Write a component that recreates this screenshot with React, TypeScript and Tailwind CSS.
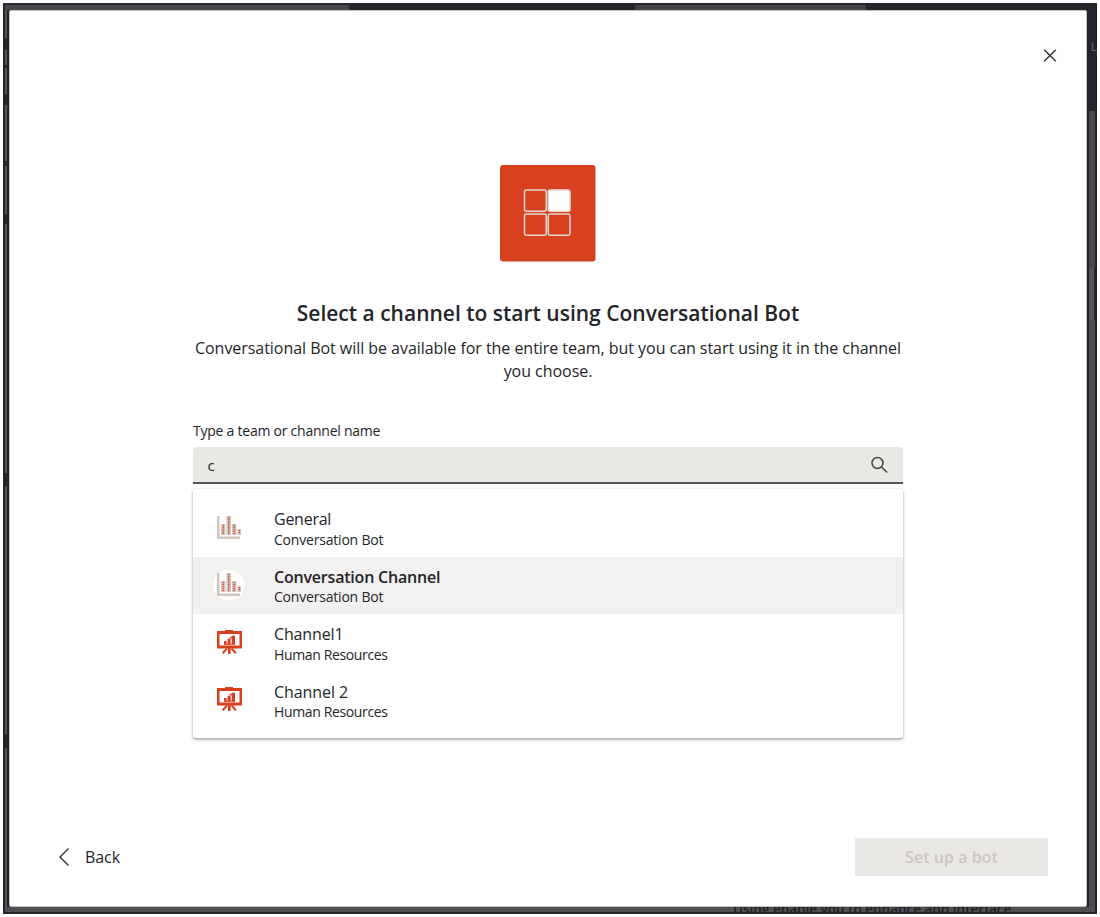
type Channel = {
  name: string;
  team: string;
  icon: "chart" | "easel";
  selected?: boolean;
  tracking: string;
  teamTracking: string;
};

const channels: Channel[] = [
  { name: "General", team: "Conversation Bot", icon: "chart", tracking: "tracking-[-0.25px]", teamTracking: "tracking-[-0.2px]" },
  { name: "Conversation Channel", team: "Conversation Bot", icon: "chart", selected: true, tracking: "tracking-[-0.2px]", teamTracking: "tracking-[-0.2px]" },
  { name: "Channel1", team: "Human Resources", icon: "easel", tracking: "tracking-[-0.15px]", teamTracking: "tracking-[-0.36px]" },
  { name: "Channel 2", team: "Human Resources", icon: "easel", tracking: "tracking-[-0.08px]", teamTracking: "tracking-[-0.36px]" },
];

function AppLogo() {
  return (
    <svg width="96" height="97" viewBox="0 0 96 97" className="block">
      <rect width="95.5" height="96.5" rx="3" fill="#d74120" />
      <g fill="none" stroke="#e6d9d3" strokeWidth="1.5">
        <rect x="24.5" y="25" width="21.75" height="21.25" rx="2" />
        <rect x="48.25" y="25" width="21.75" height="21.25" rx="2" fill="#fff" />
        <rect x="24.5" y="49" width="21.75" height="21.25" rx="2" />
        <rect x="48.25" y="49" width="21.75" height="21.25" rx="2" />
      </g>
    </svg>
  );
}

function ChartIcon() {
  return (
    <svg width="32" height="32" viewBox="0 0 32 32" className="block">
      <circle cx="16" cy="16" r="15.5" fill="#fff" />
      <g fill="#cfc6c0">
        <path d="M4 4h2.500v20.500h20.500v2.500h-23z" />
        <path d="M8 12h4.500v11H8zM13.500 4h4.500v19h-4.500zM19 12h4.500v11H19zM24.500 17h3.500v6h-3.500z" />
      </g>
      <g stroke="#e8401f" strokeWidth="1.3" strokeDasharray="1.2 0.8">
        <path d="M10.300 13v9M15.700 5v17M21.200 13v9M26.200 18v4" />
      </g>
    </svg>
  );
}

function EaselIcon() {
  return (
    <svg width="32" height="32" viewBox="0 0 32 32" className="block" fill="#d74120">
      <path fillRule="evenodd" d="M12 4V3h8v1h9v17.500H4V4zM6.500 7v11.500h20V7z" />
      <path d="M11 14h2.600v3.500H11zM14.600 12h3v5.500h-3zM18.800 8.800h3.200v8.700h-3.200z" />
      <path d="M11 16.800h11v.9H11zM14.800 11.500l6-3v3z" />
      <path d="M15 21h2.600v6H15z" />
      <path d="M14 21.500l-4.300 4.700M18.600 21.500l4.300 4.700" stroke="#d74120" strokeWidth="2" />
    </svg>
  );
}

function ChannelRow({ channel }: { channel: Channel }) {
  return (
    <li className={channel.selected ? "flex h-[57.5px] bg-[#f2f1ef] pt-[9.5px]" : "flex h-[57.5px] pt-[9.5px]"}>
      <span className="mt-[3px] ml-5 w-8 shrink-0">
        {channel.icon === "chart" ? <ChartIcon /> : <EaselIcon />}
      </span>
      <span className="ml-[29px] flex flex-col whitespace-nowrap pt-[0.5px]">
        <span className={`text-[16px] leading-5 ${channel.tracking} ${channel.selected ? "font-semibold" : "font-normal"}`}>
          {channel.name}
        </span>
        <span className={`mt-[0.5px] text-[14px] leading-5 ${channel.teamTracking}`}>{channel.team}</span>
      </span>
    </li>
  );
}

export default function App() {
  return (
    <div className="h-[917px] w-[1100px] bg-white pt-[3px] pl-[3px] font-['Open_Sans','Noto_Sans',sans-serif] text-[#252429]">
      <div className="flex h-[911px] w-[1094px] flex-col bg-[#25242a]">
        <div className="flex h-[7px] shrink-0 items-stretch pt-[2px]">
          <div className="ml-[2px] w-[344px] bg-[#48474b]" />
          <div className="ml-[286px] w-[231px] bg-[#444347]" />
        </div>
        <div className="flex h-[897px] shrink-0">
          <div className="flex w-[6px] shrink-0 flex-col border-x-2 border-[#25242a] bg-[#555459] pt-[28px]">
            <div className="h-[12px] bg-[#25242a]" />
            <div className="mt-[15px] h-[3px] bg-[#25242a]" />
            <div className="mt-[26px] h-[11px] bg-[#25242a]" />
            <div className="mt-[56px] h-[5px] bg-[#25242a]" />
            <div className="mt-[48px] h-[10px] bg-[#25242a]" />
            <div className="mt-[249px] h-[13px] bg-[#25242a]" />
            <div className="mt-[248px] h-[14px] bg-[#25242a]" />
          </div>
          <main className="flex w-[1078px] shrink-0 flex-col rounded-[2px] border border-[#c8c2be] bg-white">
            <div className="flex h-[154px] justify-end pt-[37px] pr-[28px]">
              <button aria-label="Close" className="h-4 w-4">
                <svg width="16" height="16" viewBox="0 0 16 16" fill="none" stroke="#333137" strokeWidth="1.4">
                  <path d="M2.200 1.700l11.600 11.600M13.800 1.700L2.200 13.300" />
                </svg>
              </button>
            </div>
            <div className="ml-[183px] flex w-[710px] flex-col items-center">
              <AppLogo />
              <h1 className="mt-[37px] text-[21px] leading-7 font-semibold whitespace-nowrap">
                Select a channel to start using Conversational Bot
              </h1>
              <p className="mt-[10px] text-center text-[16px] leading-[23px] tracking-[-0.042px] whitespace-nowrap">
                Conversational Bot will be available for the entire team, but you can start using it in the channel
                <br />
                you choose.
              </p>
              <label htmlFor="channel" className="mt-[38px] self-start text-[14px] leading-5 tracking-[-0.24px]">
                Type a team or channel name
              </label>
              <div className="mt-[6px] flex h-[37px] w-full shrink-0 items-center rounded-t-[2px] border-b-2 border-[#57555a] bg-[#e9e8e5] pr-[14px] pl-[14.5px]">
                <input
                  id="channel"
                  defaultValue="c"
                  className="h-full min-w-0 flex-1 bg-transparent text-[15px] outline-none"
                />
                <svg width="19" height="19" viewBox="0 0 19 19" fill="none" stroke="#48464b" strokeWidth="1.5">
                  <circle cx="7.500" cy="8" r="5.500" />
                  <path d="M11.500 12l5.700 5.500" />
                </svg>
              </div>
              <ul className="mt-[5px] h-[249px] w-full rounded-[3px] bg-white pt-[10px] shadow-[0_2px_3px_rgba(90,75,65,0.4),0_0_3px_rgba(90,80,70,0.2)]">
                {channels.map((channel) => (
                  <ChannelRow key={channel.name} channel={channel} />
                ))}
              </ul>
            </div>
            <div className="mt-[100px] flex h-[38px] items-center justify-between pr-[38px] pl-[48px]">
              <button className="flex items-center text-[16px] leading-6 tracking-[-0.07px]">
                <svg width="12" height="20" viewBox="0 0 12 20" fill="none" stroke="#333137" strokeWidth="1.400">
                  <path d="M10.500 1.500L2 10l8.500 8.500" />
                </svg>
                <span className="ml-[15px]">Back</span>
              </button>
              <button disabled className="h-[38px] w-[193px] bg-[#e9e8e5] text-[16px] font-semibold tracking-[0.05px] text-[#cdc6c1]">
                Set up a bot
              </button>
            </div>
          </main>
          <div className="flex flex-1 flex-col">
            <div className="flex h-[101px] justify-end overflow-hidden pt-[29px] text-[11px] text-[#77757a]">
              <span className="w-[6px] overflow-hidden">L</span>
            </div>
            <div className="mr-[2px] ml-[2px] h-[157px] bg-[#48474b]" />
            <div className="mr-[3px] ml-[2px] h-[52px] bg-[#555459]" />
            <div className="mr-[2px] ml-[2px] flex-1 bg-[#4d4c50]" />
          </div>
        </div>
        <div className="flex h-[7px] shrink-0 pb-[2px]">
          <div className="ml-[2px] w-[728px] bg-[#504f53]" />
          <div className="h-[5px] w-[280px] overflow-hidden bg-[#504f53] text-[13.5px] leading-[5px] font-semibold whitespace-nowrap text-[#1e1d22]">
            Using enable you to enhance and interface...
          </div>
          <div className="mr-[2px] flex-1 bg-[#504f53]" />
        </div>
      </div>
    </div>
  );
}
